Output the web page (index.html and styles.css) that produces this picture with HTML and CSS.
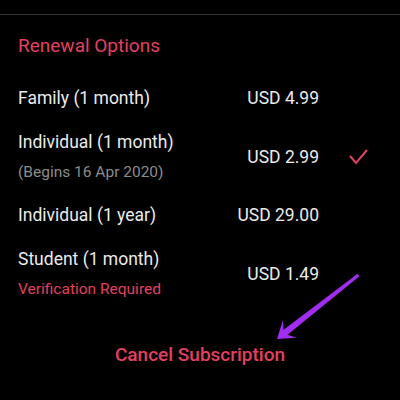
FILE: index.html
```html
<!DOCTYPE html>
<html lang="en">
<head>
  <meta charset="UTF-8" />
  <title>Renewal Options</title>
  <meta name="viewport" content="width=device-width, initial-scale=1.0" />
  <link rel="stylesheet" href="styles.css">
</head>
<body>
  <div class="divider"></div>

  <section class="options">
    <h2 class="title">Renewal Options</h2>

    <div class="row">
      <div class="info">
        <div class="name">Family (1 month)</div>
      </div>
      <div class="price">USD 4.99</div>
      <div class="check"></div>
    </div>

    <div class="row">
      <div class="info">
        <div class="name">Individual (1 month)</div>
        <div class="note">(Begins 16 Apr 2020)</div>
      </div>
      <div class="price">USD 2.99</div>
      <div class="check">
        <svg width="22" height="18" viewBox="0 0 22 18">
          <path d="M3 8 L9 15 L20 2" fill="none" stroke="#e0405e" stroke-width="2" />
        </svg>
      </div>
    </div>

    <div class="row">
      <div class="info">
        <div class="name">Individual (1 year)</div>
      </div>
      <div class="price">USD 29.00</div>
      <div class="check"></div>
    </div>

    <div class="row">
      <div class="info">
        <div class="name">Student (1 month)</div>
        <div class="note warn">Verification Required</div>
      </div>
      <div class="price">USD 1.49</div>
      <div class="check"></div>
    </div>
  </section>

  <a href="#" class="btn-cancel">Cancel Subscription</a>

  <!-- arrow drawn over the page -->
  <svg class="arrow" width="400" height="400" viewBox="0 0 400 400">
    <polygon fill="#a12cf2" points="359.4,276.2 287.6,334.7 296.4,337.7 277,339 282.8,320.5 283.6,329.7 357.6,273.8" />
  </svg>
</body>
</html>
```

FILE: styles.css
```css
body {
  margin: 0;
  background: #000;
  font-family: Roboto, 'Noto Sans', sans-serif;
  color: #ebebeb;
  height: 400px;
  overflow: hidden;
  position: relative;
}
.divider {
  margin-top: 14px;
  height: 1px;
  background: #333;
}
.options {
  padding: 0 18px;
}
.title {
  margin: 19px 0 0;
  font-size: 19px;
  line-height: 24px;
  font-weight: 400;
  color: #e3405f;
}
.row {
  display: flex;
  align-items: center;
  padding: 11px 0;
}
.row:first-of-type {
  margin-top: 18px;
}
.info {
  flex: 1;
}
.name {
  font-size: 17.5px;
  line-height: 22px;
}
.note {
  margin-top: 9px;
  font-size: 15.5px;
  line-height: 20px;
  color: #8c8c8c;
}
.note.warn {
  color: #e3405f;
}
.price {
  font-size: 17.5px;
  line-height: 22px;
  text-align: right;
}
.check {
  width: 63px;
  display: flex;
  justify-content: flex-end;
  padding-right: 13px;
  box-sizing: border-box;
}
.btn-cancel {
  display: block;
  margin-top: 33px;
  text-align: center;
  font-size: 19px;
  line-height: 24px;
  font-weight: 500;
  color: #e3405f;
  text-decoration: none;
}
.arrow {
  position: absolute;
  top: 0;
  left: 0;
}
```
